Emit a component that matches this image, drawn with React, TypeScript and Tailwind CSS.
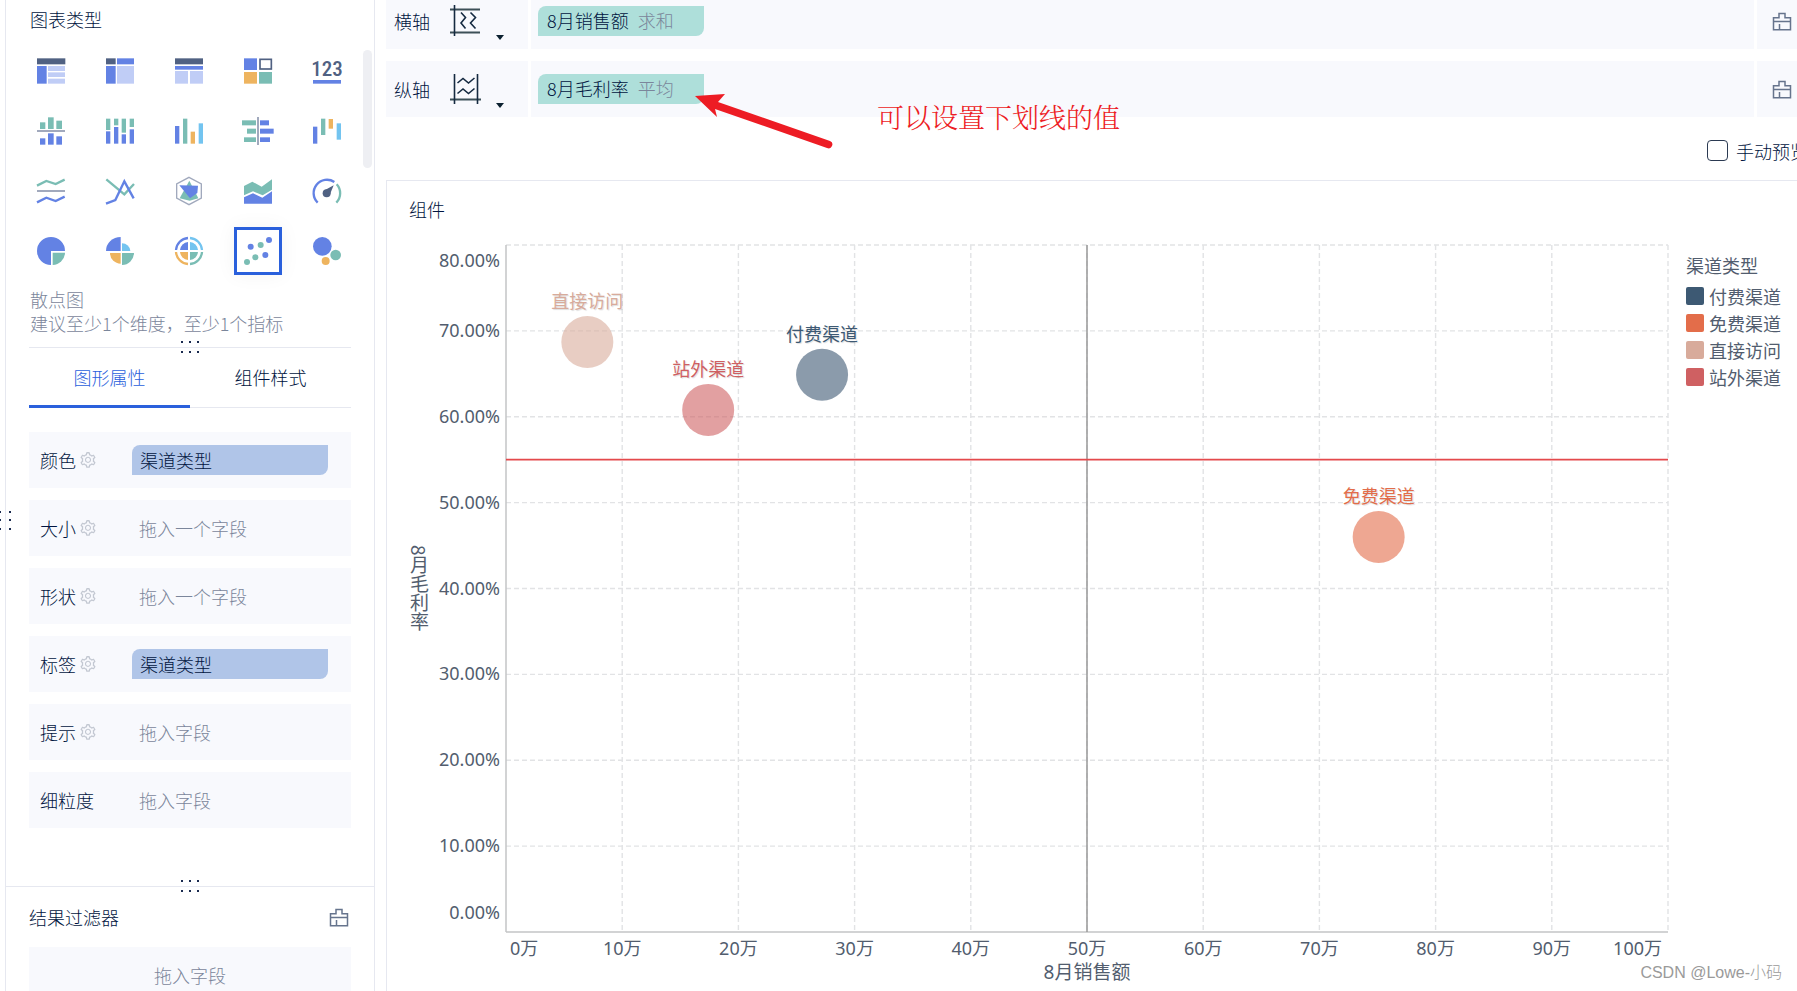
import { useState, ReactNode } from "react";
import { AiOutlineSetting } from "react-icons/ai";

const BLUE = "#6382e4";
const DARK = "#506182";
const LIGHT = "#c0cdf6";
const TEAL = "#7abdb4";
const ORANGE = "#eeb45f";
const SKY = "#73c4f0";
const GRAY = "#a1a9bd";

type Box = [number, number, number, number, string];

function Boxes({ items }: { items: Box[] }) {
  return (
    <>
      {items.map(([x, y, w, h, fill], i) => (
        <rect key={i} x={x} y={y} width={w} height={h} fill={fill} />
      ))}
    </>
  );
}

const chartTypes: { name: string; art: ReactNode }[] = [
  {
    name: "分组表",
    art: <Boxes items={[[6, 10, 85, 18, DARK], [6, 33, 29, 53, BLUE], [39, 33, 51, 15, LIGHT], [39, 52, 51, 14, LIGHT], [39, 71, 51, 15, LIGHT]]} />,
  },
  {
    name: "交叉表",
    art: <Boxes items={[[6, 10, 29, 18, DARK], [39, 10, 51, 18, BLUE], [6, 33, 29, 53, BLUE], [39, 33, 51, 53, LIGHT]]} />,
  },
  {
    name: "明细表",
    art: <Boxes items={[[6, 10, 84, 18, DARK], [6, 33, 84, 11, BLUE], [6, 48, 39, 38, LIGHT], [51, 48, 39, 38, LIGHT]]} />,
  },
  {
    name: "颜色表格",
    art: (
      <>
        <Boxes items={[[6, 10, 39, 35, BLUE], [6, 51, 39, 35, ORANGE], [51, 51, 39, 35, TEAL]]} />
        <rect x={54} y={13} width={34} height={29} fill="none" stroke={DARK} strokeWidth={5} />
      </>
    ),
  },
  {
    name: "KPI指标卡",
    art: (
      <>
        <text x={48} y={62} textAnchor="middle" fontSize={63} fill={DARK} className="font-['Liberation_Sans_Narrow','Roboto_Condensed',Roboto,sans-serif] font-medium">
          123
        </text>
        <rect x={6} y={75} width={84} height={11} fill={BLUE} />
      </>
    ),
  },
  {
    name: "对比柱形图",
    art: <Boxes items={[[15, 22, 16, 20, TEAL], [39, 7, 17, 35, TEAL], [64, 17, 17, 25, TEAL], [6, 45, 84, 6, GRAY], [15, 70, 16, 19, BLUE], [39, 55, 17, 34, BLUE], [64, 64, 17, 25, BLUE]]} />,
  },
  {
    name: "堆积柱形图",
    art: <Boxes items={[[6, 11, 13, 34, TEAL], [30, 11, 13, 20, TEAL], [53, 11, 13, 42, TEAL], [77, 11, 13, 25, TEAL], [6, 49, 13, 37, BLUE], [30, 36, 13, 50, BLUE], [53, 58, 13, 28, BLUE], [77, 43, 13, 43, BLUE]]} />,
  },
  {
    name: "柱形图",
    art: <Boxes items={[[6, 33, 13, 53, BLUE], [30, 11, 13, 75, TEAL], [53, 50, 13, 36, ORANGE], [77, 25, 13, 61, SKY]]} />,
  },
  {
    name: "对比条形图",
    art: <Boxes items={[[0, 16, 42, 15, TEAL], [15, 41, 27, 15, TEAL], [6, 67, 36, 14, TEAL], [45, 6, 6, 84, GRAY], [54, 16, 27, 15, BLUE], [54, 41, 41, 15, BLUE], [54, 67, 30, 14, BLUE]]} />,
  },
  {
    name: "瀑布图",
    art: <Boxes items={[[6, 35, 13, 51, BLUE], [30, 11, 13, 49, TEAL], [53, 12, 13, 29, ORANGE], [77, 25, 13, 49, SKY]]} />,
  },
  {
    name: "范围面积图",
    art: (
      <g fill="none" strokeWidth={7}>
        <polyline points="6,32 34,18 62,27 89,14" stroke={TEAL} />
        <path d="M6 48H90" stroke={GRAY} strokeWidth={6} />
        <polyline points="6,82 34,68 62,78 89,65" stroke={BLUE} />
      </g>
    ),
  },
  {
    name: "折线图",
    art: (
      <g fill="none" strokeWidth={7}>
        <polyline points="7,13 61,58 90,27" stroke={TEAL} />
        <polyline points="6,86 34,75 61,19 89,70" stroke={BLUE} />
      </g>
    ),
  },
  {
    name: "雷达图",
    art: (
      <>
        <polygon points="48,7 85,27 85,69 48,89 11,69 11,27" fill="none" stroke={GRAY} strokeWidth={4} />
        <polygon points="49,17 76,70 50,77 20,70" fill={TEAL} />
        <polygon points="19,31 75,32 73,54 51,70" fill={BLUE} />
      </>
    ),
  },
  {
    name: "面积图",
    art: (
      <>
        <polygon points="6,33 31,20 59,35 90,13 90,44 62,61 33,49 6,61" fill={TEAL} />
        <polygon points="6,67 33,55 61,68 90,49 90,86 6,86" fill={BLUE} />
      </>
    ),
  },
  {
    name: "仪表盘",
    art: (
      <>
        <g fill="none" strokeWidth={7}>
          <path d="M20 83A40 40 0 0 1 70 21" stroke={BLUE} />
          <path d="M77 28A40 40 0 0 1 76 83" stroke={TEAL} />
        </g>
        <circle cx={47} cy={55} r={12} fill={DARK} />
        <path d="M41 46L68 31L56 60Z" fill={DARK} />
      </>
    ),
  },
  {
    name: "饼图",
    art: (
      <>
        <path d="M48 90A42 42 0 1 1 90 48H48Z" fill={BLUE} />
        <path d="M53 53H90A38 38 0 0 1 53 90Z" fill={TEAL} />
      </>
    ),
  },
  {
    name: "玫瑰图",
    art: (
      <>
        <path d="M50 6V48H6A44 42 0 0 1 50 6Z" fill={BLUE} />
        <path d="M54 25A25 24 0 0 1 79 48H54Z" fill={SKY} />
        <path d="M50 54V86A32 32 0 0 1 18 54Z" fill={ORANGE} />
        <path d="M54 54H90A37 37 0 0 1 54 90Z" fill={TEAL} />
      </>
    ),
  },
  {
    name: "多层饼图",
    art: (
      <>
        <path d="M45 21V45H21A27 27 0 0 1 45 21Z" fill={BLUE} />
        <path d="M51 21A27 27 0 0 1 75 45H51Z" fill={SKY} />
        <path d="M45 51V75A27 27 0 0 1 21 51Z" fill={ORANGE} />
        <path d="M51 51H75A27 27 0 0 1 51 75Z" fill={TEAL} />
        <g fill="none" strokeWidth={7}>
          <path d="M9 45A39 39 0 0 1 45 9" stroke={BLUE} />
          <path d="M51 9A39 39 0 0 1 87 45" stroke={SKY} />
          <path d="M45 87A39 39 0 0 1 9 51" stroke={ORANGE} />
          <path d="M87 51A39 39 0 0 1 51 87" stroke={TEAL} />
        </g>
      </>
    ),
  },
  {
    name: "散点图",
    art: (
      <>
        <g fill={BLUE}>
          <circle cx={26} cy={35} r={9} />
          <circle cx={81} cy={15} r={9} />
          <circle cx={70} cy={60} r={9} />
        </g>
        <g fill={TEAL}>
          <circle cx={56} cy={30} r={9} />
          <circle cx={40} cy={67} r={9} />
          <circle cx={15} cy={81} r={9} />
        </g>
      </>
    ),
  },
  {
    name: "聚合气泡图",
    art: (
      <>
        <circle cx={34} cy={34} r={28} fill={BLUE} />
        <circle cx={74} cy={60} r={16} fill={TEAL} />
        <circle cx={44} cy={78} r={12} fill={ORANGE} />
      </>
    ),
  },
];

const shelves = [
  { label: "颜色", gear: true, field: "渠道类型" },
  { label: "大小", gear: true, placeholder: "拖入一个字段" },
  { label: "形状", gear: true, placeholder: "拖入一个字段" },
  { label: "标签", gear: true, field: "渠道类型" },
  { label: "提示", gear: true, placeholder: "拖入字段" },
  { label: "细粒度", gear: false, placeholder: "拖入字段" },
];

// x in 万, y in percent
const points = [
  { name: "付费渠道", x: 27.2, y: 64.9, color: "#3d5973" },
  { name: "免费渠道", x: 75.1, y: 46, color: "#e36d4a" },
  { name: "直接访问", x: 7, y: 68.7, color: "#d8ab9b" },
  { name: "站外渠道", x: 17.4, y: 60.8, color: "#cf6062" },
];

const steps = [0, 10, 20, 30, 40, 50, 60, 70, 80, 90, 100];

function BrushIcon() {
  return (
    <svg width="20" height="20" viewBox="0 0 20 20" fill="none" stroke="#66748d" strokeWidth="1.5">
      <path d="M1.5 18.8V6.8H7V2.4H13V6.8H18.5V18.8Z" />
      <path d="M1.5 10.4H18.5M7.5 13V18.8" />
    </svg>
  );
}

function XAxisIcon() {
  return (
    <svg width="32" height="32" viewBox="0 0 32 32" fill="none" stroke="#152a41" strokeWidth="1.6">
      <path d="M0 4.5H30M0 27.5H30" stroke="#3d5058" strokeWidth="2" />
      <path d="M4.5 0V31" />
      <path d="M11 7.5L15.5 12.5L11 18L15.5 23.5M20.5 7.5L25.5 12.5L20.5 18L25.5 23.5" />
    </svg>
  );
}

function YAxisIcon() {
  return (
    <svg width="32" height="32" viewBox="0 0 32 32" fill="none" stroke="#152a41" strokeWidth="1.6">
      <path d="M0 26.5H31" stroke="#3d5058" strokeWidth="2" />
      <path d="M4.5 1V31M27.5 1V31" />
      <path d="M7.5 10L13 5.5L18.5 10L24.5 5M7.5 20.5L13 16L18.5 20.5L24.5 15.5" />
    </svg>
  );
}

function DragDots() {
  return (
    <svg width="20" height="12" viewBox="0 0 20 12" fill="#1a2b50" className="absolute -top-[7px] left-1/2 -translate-x-1/2">
      <path d="M1 0h2v2h-2zM9 0h2v2h-2zM17 0h2v2h-2zM1 10h2v2h-2zM9 10h2v2h-2zM17 10h2v2h-2z" />
    </svg>
  );
}

function AxisShelf({ label, icon, field, summary }: { label: string; icon: ReactNode; field: string; summary: string }) {
  return (
    <div className="flex h-14 gap-[3px]">
      <div className="flex w-[142px] items-center bg-[#f8f9fd] pl-2">
        <span className="w-14">{label}</span>
        <button aria-label={label + "设置"} className="flex items-end gap-3.5">
          {icon}
          <svg width="8" height="6" viewBox="0 0 8 6" fill="#0c2130" className="-mb-1">
            <path d="M0 0H8L4 5Z" />
          </svg>
        </button>
      </div>
      <div className="flex flex-1 items-center bg-[#f8f9fd] pl-[7px]">
        <div className="flex h-[30px] w-[166px] items-center gap-[9px] rounded-tl-lg rounded-br-lg bg-[#aedfda] pb-0.5 pl-[9px] whitespace-nowrap">
          <span>{field}</span>
          <span className="text-[#7b869b]">{summary}</span>
        </div>
      </div>
      <div className="flex w-10 items-center bg-[#f8f9fd] pl-[15px]">
        <button aria-label="清空">
          <BrushIcon />
        </button>
      </div>
    </div>
  );
}

function ScatterPlot() {
  return (
    <svg width="100%" height="100%" className="overflow-visible font-['Noto_Sans','Noto_Sans_CJK_SC',sans-serif] text-lg font-normal" fill="#525d6e">
      <g stroke="#e2e3e5" strokeWidth="1.4" strokeDasharray="5 3">
        {steps.slice(1).map((v) => (
          <line key={v} x1={`${v}%`} x2={`${v}%`} y1="0" y2="100%" />
        ))}
        {steps.slice(1, 9).map((v) => (
          <line key={v} x1="0" x2="100%" y1={`${100 - v * 1.25}%`} y2={`${100 - v * 1.25}%`} />
        ))}
      </g>
      <g stroke="#c3c4c6" strokeWidth="1.5">
        <line x1="0" x2="0" y1="0" y2="100%" />
        <line x1="0" x2="100%" y1="100%" y2="100%" />
      </g>

      {steps.slice(0, 9).map((v) => {
        // the first and last labels are kept inside the plot
        const shift = v === 0 ? -13 : v === 80 ? 22 : 6;
        return (
          <text key={v} x="-6" y={`${100 - v * 1.25}%`} dy={shift} textAnchor="end">
            {v.toFixed(2)}%
          </text>
        );
      })}
      {steps.map((v) => (
        <text
          key={v}
          x={`${v}%`}
          dx={v === 0 ? 4 : v === 100 ? -6 : 0}
          y="100%"
          dy="23"
          textAnchor={v === 0 ? "start" : v === 100 ? "end" : "middle"}
        >
          {v}万
        </text>
      ))}
      <text x="50%" y="100%" dy="47" textAnchor="middle" className="text-[19px]">8月销售额</text>

      {points.map((p) => (
        <circle key={p.name} cx={`${p.x}%`} cy={`${100 - p.y * 1.25}%`} r="26" fill={p.color} fillOpacity="0.6" />
      ))}
      <line x1="50%" x2="50%" y1="0" y2="100%" stroke="#999" strokeWidth="1.5" />
      <line x1="0" x2="100%" y1="31.25%" y2="31.25%" stroke="#e4494c" strokeWidth="1.8" />
      {points.map((p) => (
        <text key={p.name} x={`${p.x}%`} y={`${100 - p.y * 1.25}%`} dy="-34" textAnchor="middle" fill={p.color} className="[text-shadow:1px_1px_1px_#0002]">
          {p.name}
        </text>
      ))}
    </svg>
  );
}

export default function App() {
  const [selected, setSelected] = useState("散点图");
  const [tab, setTab] = useState("图形属性");
  const [manual, setManual] = useState(false);

  return (
    <div className="relative flex h-screen overflow-hidden bg-white font-['Noto_Sans_CJK_SC','Noto_Sans',sans-serif] text-lg leading-6 font-light text-[#001440]">
      {/* left panel */}
      <aside className="relative ml-[5px] w-[370px] shrink-0 border-x border-[#e6e8f0]">
        <h2 className="pt-[7px] pl-6">图表类型</h2>
        <div className="mt-4 ml-[21px] grid w-[324px] grid-cols-[repeat(5,48px)] justify-between gap-y-3">
          {chartTypes.map((c) => (
            <button
              key={c.name}
              aria-label={c.name}
              onClick={() => setSelected(c.name)}
              className={
                selected === c.name
                  ? "flex size-12 items-center justify-center border-3 border-[#2a60dc] shadow-[0_0_20px_#0000000d]"
                  : "flex size-12 items-center justify-center"
              }
            >
              <svg width="32" height="32" viewBox="0 0 96 96" className="shrink-0">
                {c.art}
              </svg>
            </button>
          ))}
        </div>
        <div className="absolute top-[50px] right-0.5 h-[118px] w-[9px] rounded-full bg-[#eeeff3]" />

        <p className="mt-3 pl-6 text-[#7b869b]">散点图</p>
        <p className="pl-6 text-[#7b869b]">建议至少1个维度，至少1个指标</p>

        <div className="relative mx-[23px] mt-3 border-t border-[#e6e8f0]">
          <DragDots />
        </div>

        <div className="mx-[23px] flex h-[60px] border-b border-[#e6e8f0]">
          {["图形属性", "组件样式"].map((t) => (
            <button
              key={t}
              onClick={() => setTab(t)}
              className={
                tab === t
                  ? "-mb-px flex-1 border-b-3 border-[#2a60dc] text-[#2a60dc]"
                  : "-mb-px flex-1 border-b-3 border-transparent"
              }
            >
              {t}
            </button>
          ))}
        </div>

        <div className="mx-[23px] mt-6 flex flex-col gap-3">
          {shelves.map((s) => (
            <div key={s.label} className="flex h-14 items-center bg-[#f8f9fd] pl-[11px]">
              <div className="flex w-[92px] items-center gap-[3px]">
                {s.label}
                {s.gear && (
                  <button aria-label={s.label + "设置"}>
                    <AiOutlineSetting className="size-[18px] text-[#c3c8d2]" />
                  </button>
                )}
              </div>
              {s.field ? (
                <div className="mr-[23px] flex h-[30px] flex-1 items-center rounded-tl-lg rounded-br-lg bg-[#b0c5e8] pl-2">{s.field}</div>
              ) : (
                <span className="pl-[7px] text-[#7b869b]">{s.placeholder}</span>
              )}
            </div>
          ))}
        </div>

        <div className="relative mt-[58px] border-t border-[#e6e8f0]">
          <DragDots />
        </div>
        <div className="mx-[23px] flex h-[60px] items-center justify-between">
          <h2>结果过滤器</h2>
          <button aria-label="清空过滤器" className="pr-0.5">
            <BrushIcon />
          </button>
        </div>
        <div className="mx-[23px] flex h-14 items-center justify-center bg-[#f8f9fd] text-[#7b869b]">拖入字段</div>
      </aside>
      <svg width="12" height="20" viewBox="0 0 12 20" fill="#1a2b50" className="absolute top-[511px] left-0">
        <path d="M0 0h1v2h-1zM9 0h2v2h-2zM0 8h1v2h-1zM9 8h2v2h-2zM0 17h1v2h-1zM9 17h2v2h-2z" />
      </svg>

      {/* work area */}
      <main className="relative -mt-[7px] ml-[11px] flex min-w-0 flex-1 flex-col">
        <div className="flex flex-col gap-3">
          <AxisShelf label="横轴" icon={<XAxisIcon />} field="8月销售额" summary="求和" />
          <AxisShelf label="纵轴" icon={<YAxisIcon />} field="8月毛利率" summary="平均" />
        </div>

        <label className="-mr-[11px] flex h-[63px] items-center justify-end gap-2 pt-1 whitespace-nowrap">
          <input
            type="checkbox"
            checked={manual}
            onChange={(e) => setManual(e.target.checked)}
            className="size-[21px] appearance-none rounded-sm border border-[#2b3a52] bg-white checked:bg-[#2a60dc]"
          />
          手动预览
        </label>

        <section className="flex min-h-0 flex-1 flex-col border-t border-l border-[#e6e8f0]">
          <h3 className="mt-4 pl-[22px]">组件</h3>
          <div className="mt-6 mb-[59px] flex min-h-0 flex-1 font-normal text-[#525d6e]">
            <div className="flex w-[119px] items-center pl-5">
              <span className="text-[19px] [writing-mode:vertical-rl]">8月毛利率</span>
            </div>
            <div className="min-w-0 flex-1">
              <ScatterPlot />
            </div>
            <ul className="w-[129px] pl-[18px]">
              <li className="mt-2 mb-[5px]">渠道类型</li>
              {points.map((p) => (
                <li key={p.name} className="flex h-[27px] items-center gap-[5px]">
                  <span className="size-[18px] rounded-xs" style={{ backgroundColor: p.color }} />
                  {p.name}
                </li>
              ))}
            </ul>
          </div>
        </section>
      </main>

      {/* annotation over the page */}
      <svg width="140" height="60" viewBox="0 0 140 60" fill="#ed1c24" className="absolute top-[92px] left-[693px]">
        <path d="M2 4L32 2L25 10L137 49A3.4 3.4 0 0 1 134 56L22 17L24 25Z" />
      </svg>
      <p className="absolute top-[99px] left-[877px] font-['Noto_Serif_CJK_SC','AR_PL_UMing_CN','Noto_Sans_CJK_SC',serif] text-[27px] leading-9 text-[#ed1c24]">
        可以设置下划线的值
      </p>
      <p className="absolute right-[15px] bottom-[6px] font-['Liberation_Sans','Noto_Sans_CJK_SC',sans-serif] text-base text-[#9a9a9a]">CSDN @Lowe-小码</p>
    </div>
  );
}
